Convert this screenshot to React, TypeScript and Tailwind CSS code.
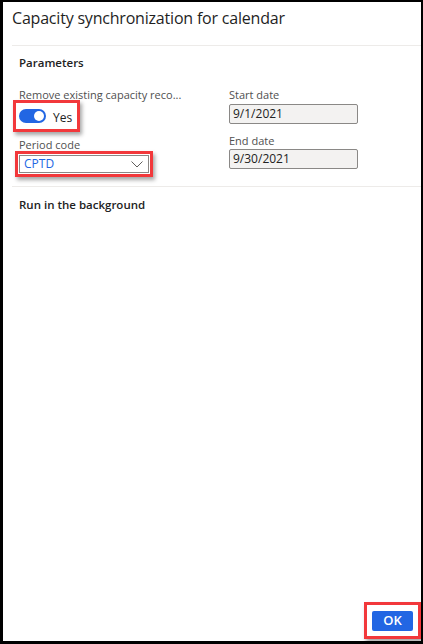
const font = { fontFamily: '"Open Sans", "Noto Sans", sans-serif' };

// Red annotation frame used around the highlighted controls
const Highlight = ({ children, className = '' }: { children: React.ReactNode; className?: string }) => (
  <div className={`border-[3px] border-[#f2383b] shadow-[2px_3px_4px_rgba(0,0,0,0.35)] ${className}`}>
    {children}
  </div>
);

const Field = ({ label, children }: { label: string; children: React.ReactNode }) => (
  <div className="flex flex-col">
    <span className="text-[11px] leading-[14px] text-[#505050]">{label}</span>
    {children}
  </div>
);

export default function App() {
  return (
    <div className="w-[423px] h-[644px] bg-black pt-[2px] pl-[3px] pr-[2px] pb-[3px]" style={font}>
      <div className="w-full h-full bg-white flex flex-col">
        {/* Header */}
        <div className="pl-[9px] pt-[4px] h-[43px]">
          <h1 className="text-[16px] leading-[24px] text-[#1f1f1f] tracking-[-0.2px]">
            Capacity synchronization for calendar
          </h1>
        </div>
        <div className="ml-[9px] h-px bg-[#edebe9]" />

        {/* Parameters */}
        <div className="pl-[16px] pt-[8px] pb-[9px]">
          <h2 className="text-[11.5px] leading-[18px] font-semibold text-[#222]">Parameters</h2>
          <div className="mt-[16px] flex">
            <div className="w-[210px] flex flex-col">
              <Field label="Remove existing capacity reco...">
                <Highlight className="-ml-[6px] -mt-[2px] w-[67px] h-[32px] flex items-center pl-[3px] gap-[7px]">
                  <div className="w-[27px] h-[14px] rounded-full bg-[#2266e3] flex items-center justify-end pr-[2px]">
                    <div className="w-[10px] h-[10px] rounded-full bg-white" />
                  </div>
                  <span className="text-[12px] text-[#222] mt-[3px]">Yes</span>
                </Highlight>
              </Field>
              <div className="mt-[6px]">
                <Field label="Period code">
                  <Highlight className="-ml-[4px] -mt-px w-[138px] h-[26px] p-px">
                    <div className="h-full border border-[#8a8886] flex items-center justify-between pl-[4px] pr-[5px]">
                      <span className="text-[12px] text-[#2266e3]">CPTD</span>
                      <svg width="12" height="7" viewBox="0 0 12 7" fill="none" stroke="#605e5c" strokeWidth="1">
                        <polyline points="0.5,0.5 6,6 11.5,0.5" />
                      </svg>
                    </div>
                  </Highlight>
                </Field>
              </div>
            </div>
            <div className="flex flex-col">
              <Field label="Start date">
                <div className="mt-[2px] w-[129px] h-[20px] bg-[#f3f2f1] border border-[#8a8886] rounded-[2px] flex items-center px-[3px] text-[12px] text-[#222]">
                  9/1/2021
                </div>
              </Field>
              <div className="mt-[10px]">
                <Field label="End date">
                  <div className="mt-[1px] w-[129px] h-[20px] bg-[#f3f2f1] border border-[#8a8886] rounded-[2px] flex items-center px-[3px] text-[12px] text-[#222]">
                    9/30/2021
                  </div>
                </Field>
              </div>
            </div>
          </div>
        </div>
        <div className="ml-[9px] h-px bg-[#edebe9]" />

        {/* Run in the background */}
        <div className="pl-[16px] pt-[9px]">
          <h2 className="text-[11.5px] leading-[18px] font-semibold text-[#222]">Run in the background</h2>
        </div>

        {/* Footer */}
        <div className="mt-auto flex justify-end pb-[2px]">
          <Highlight className="w-[57px] h-[37px] flex items-center justify-center">
            <button className="w-[41px] h-[20px] bg-[#2266e3] rounded-[2px] text-white text-[13px] font-semibold leading-none">
              OK
            </button>
          </Highlight>
        </div>
      </div>
    </div>
  );
}
